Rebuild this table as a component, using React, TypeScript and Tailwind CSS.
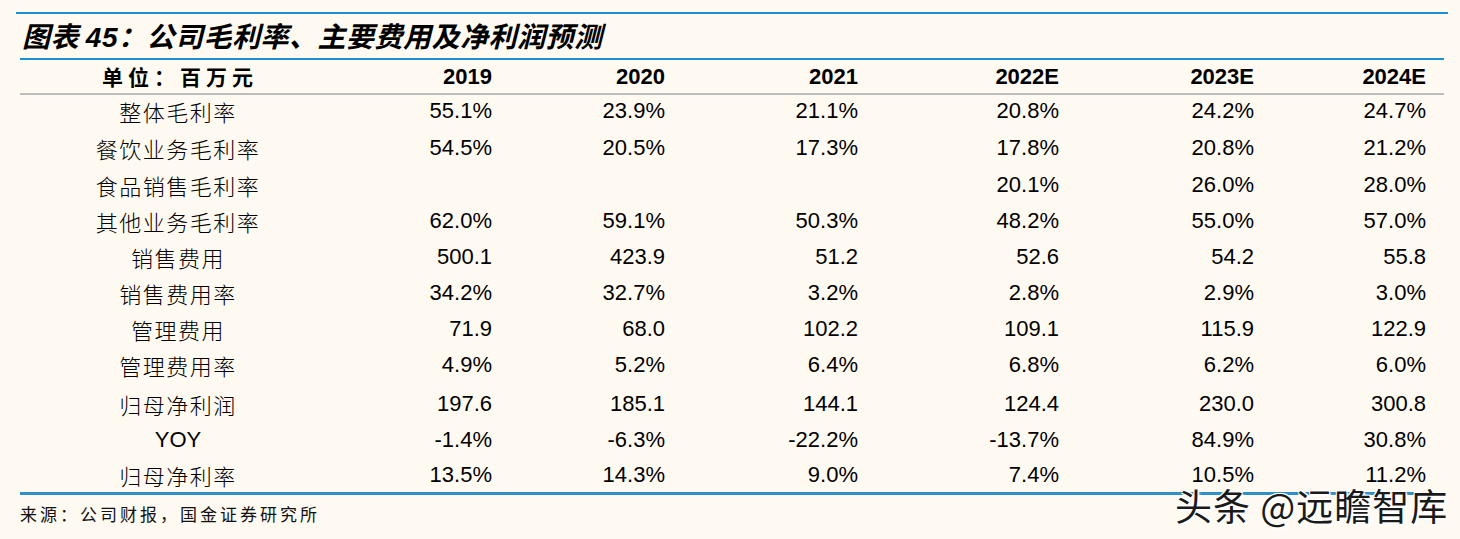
import React from "react";

const rows: [string, string[], string][] = [
  ["整体毛利率", ["55.1%", "23.9%", "21.1%", "20.8%", "24.2%", "24.7%"], "h-[37px] pb-[5px]"],
  ["餐饮业务毛利率", ["54.5%", "20.5%", "17.3%", "17.8%", "20.8%", "21.2%"], "h-[37px] pb-[5px]"],
  ["食品销售毛利率", ["", "", "", "20.1%", "26.0%", "28.0%"], "h-[36px] pb-[5px]"],
  ["其他业务毛利率", ["62.0%", "59.1%", "50.3%", "48.2%", "55.0%", "57.0%"], "h-[36px] pb-[5px]"],
  ["销售费用", ["500.1", "423.9", "51.2", "52.6", "54.2", "55.8"], "h-[36px] pb-[5px]"],
  ["销售费用率", ["34.2%", "32.7%", "3.2%", "2.8%", "2.9%", "3.0%"], "h-[36px] pb-[5px]"],
  ["管理费用", ["71.9", "68.0", "102.2", "109.1", "115.9", "122.9"], "h-[36px] pb-[5px]"],
  ["管理费用率", ["4.9%", "5.2%", "6.4%", "6.8%", "6.2%", "6.0%"], "h-[36px] pb-[5px]"],
  ["归母净利润", ["197.6", "185.1", "144.1", "124.4", "230.0", "300.8"], "h-[39px] pt-[3px] pb-[5px]"],
  ["YOY", ["-1.4%", "-6.3%", "-22.2%", "-13.7%", "84.9%", "30.8%"], "h-[36px] pb-[5px]"],
  ["归母净利率", ["13.5%", "14.3%", "9.0%", "7.4%", "10.5%", "11.2%"], "h-[32px] pb-[3px]"],
];

const years = ["2019", "2020", "2021", "2022E", "2023E", "2024E"];

const CJK = "font-['Noto_Sans_CJK_SC','Noto_Sans',sans-serif]";
const NUM = "font-['Liberation_Sans',Arial,sans-serif]";
const COLS = "grid grid-cols-[316px_156px_173px_193px_201px_195px_172px] items-center";

export default function App() {
  return (
    <div className="relative w-[1460px] h-[539px] bg-[#fffaf1] overflow-hidden text-black">
      <div className="ml-[16px] w-[1432px] pt-[12px]">
        <div className="border-t-[2px] border-[#1b8fd6] h-[46px] flex items-center pl-[6px]">
          <span className={`${CJK} text-[28px] font-bold italic leading-none tracking-[0.5px]`}>
            图表 <span className={NUM}>45</span>：公司毛利率、主要费用及净利润预测
          </span>
        </div>
      </div>
      <div className="ml-[20px] w-[1424px]">
        <div className="border-t-[2px] border-[#1b8fd6]">
          <div className={`${COLS} h-[35px] border-b-[2px] border-[#bdbdbd]`}>
            <div className={`${CJK} text-center text-[21px] font-bold tracking-[5px] leading-none pl-[4px]`}>
              单位：百万元
            </div>
            {years.map((y) => (
              <div key={y} className={`${NUM} text-right text-[22px] font-bold leading-none`}>
                {y}
              </div>
            ))}
          </div>
          <div className="border-b-[3px] border-[#2f8fc8]">
            {rows.map(([label, vals, h]) => (
              <div key={label} className={`${COLS} ${h}`}>
                {label === "YOY" ? (
                  <div className={`${NUM} text-center text-[22px] leading-none`}>{label}</div>
                ) : (
                  <div className={`${CJK} text-center text-[22px] font-light tracking-[1.5px] leading-none`}>
                    {label}
                  </div>
                )}
                {vals.map((v, j) => (
                  <div key={j} className={`${NUM} text-right text-[22px] leading-none`}>
                    {v}
                  </div>
                ))}
              </div>
            ))}
          </div>
        </div>
        <div className={`${CJK} pt-[10px] text-[17px] tracking-[3px] leading-none text-[#111]`}>
          来源：公司财报，国金证券研究所
        </div>
      </div>
      <div
        className={`${CJK} absolute left-[1175px] top-[487px] text-[37px] tracking-[1px] leading-none text-[#1a1a1a] whitespace-nowrap [text-shadow:1px_1px_0_#fff,-1px_-1px_0_#fff,1px_-1px_0_#fff,-1px_1px_0_#fff,2px_2px_2px_rgba(255,255,255,0.9)]`}
      >
        头条 @远瞻智库
      </div>
    </div>
  );
}
